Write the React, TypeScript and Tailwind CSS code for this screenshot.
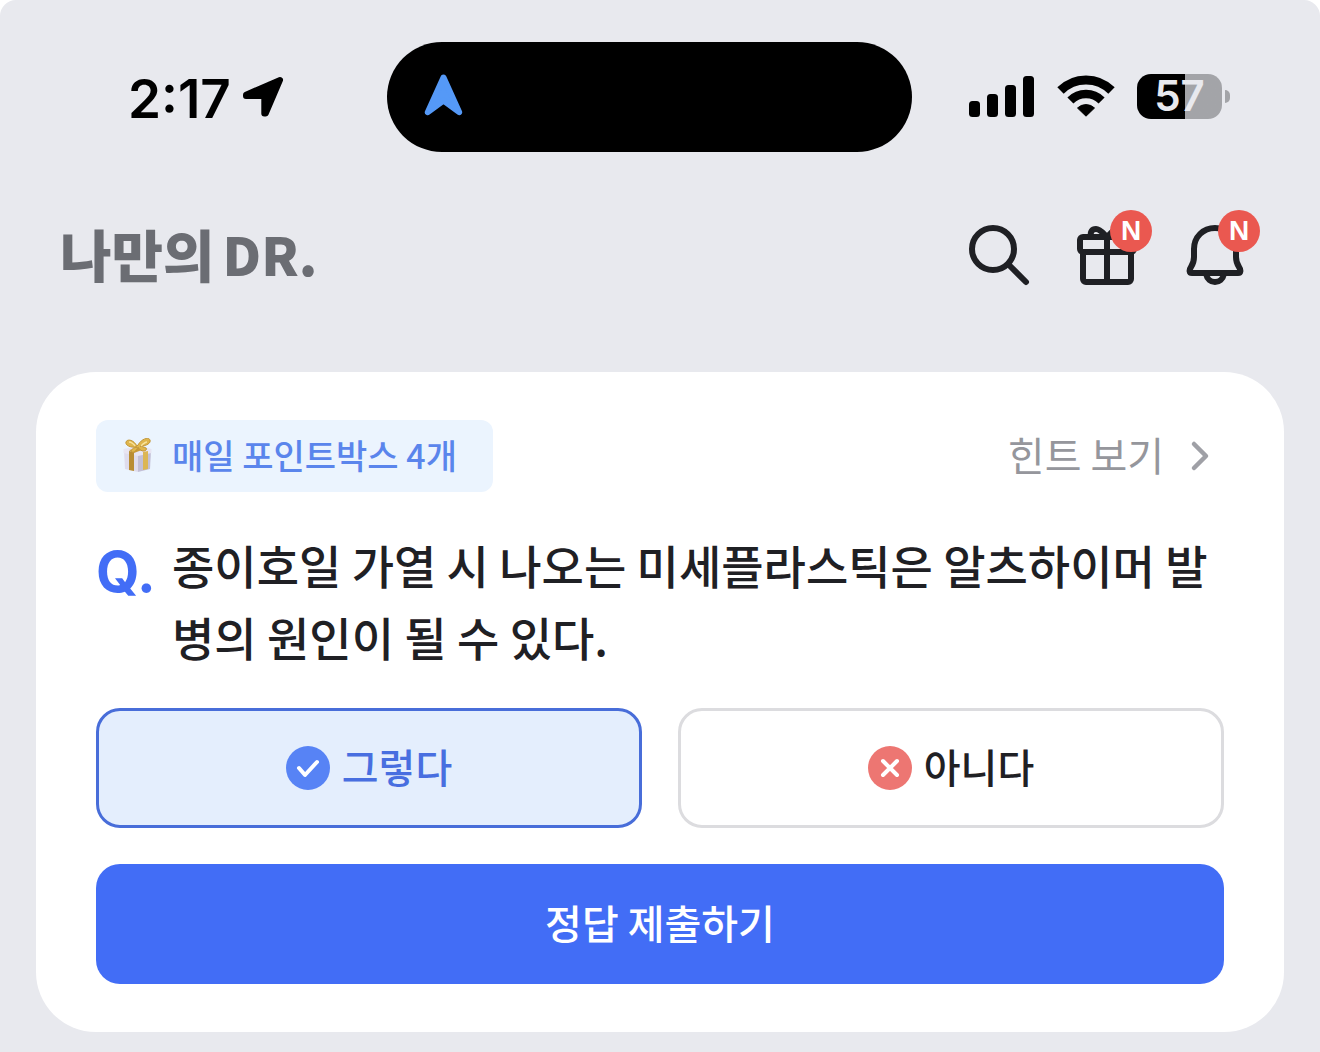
import { useState } from 'react';
import { clsx } from 'clsx';

function StatusBar() {
  return (
    <div className="grid grid-cols-[1fr_525px_1fr] items-center pr-[22px] pt-[42px] text-black">
      <div className="flex items-center gap-3 pl-32">
        <span className="pt-1 font-['Inter',sans-serif] text-[53px] leading-[60px] font-semibold">2:17</span>
        <svg className="size-[42px]" viewBox="0 0 42 42" aria-hidden="true">
          <path
            d="M37 4 3 18.7v1.3h18.3v17.5h1.400L37 4Z"
            fill="black"
            stroke="black"
            strokeWidth="6"
            strokeLinejoin="round"
          />
        </svg>
      </div>

      {/* Dynamic island */}
      <div className="flex h-[110px] items-center rounded-[56px] bg-black pb-1 pl-[37px]">
        <svg className="h-[42px] w-[39px]" viewBox="0 0 39 42" aria-hidden="true">
          <path
            d="M19.5 3.5 3.8 38.2 19.5 26.5 35.2 38.2Z"
            fill="#5599f7"
            stroke="#5599f7"
            strokeWidth="6"
            strokeLinejoin="round"
          />
        </svg>
      </div>

      <div className="flex items-center justify-end pr-[68px] pb-0.5">
        <svg className="h-[42px] w-[66px]" viewBox="0 0 66 42" aria-hidden="true">
          <rect x="0" y="26" width="11" height="16" rx="3.5" />
          <rect x="18" y="19" width="11" height="23" rx="3.5" />
          <rect x="36" y="10" width="11" height="32" rx="3.5" />
          <rect x="54" y="1" width="11" height="41" rx="3.5" />
        </svg>
        <svg className="ml-[22px] h-[42px] w-[58px]" viewBox="0 0 58 42" fill="none" stroke="black" aria-hidden="true">
          <path d="M3.5 15.5a36 36 0 0 1 51 0" strokeWidth="9" />
          <path d="M13.4 25.4a22 22 0 0 1 31.2 0" strokeWidth="8.5" />
          <path d="M20.5 33a12.3 12.3 0 0 1 17 0L29 41.2Z" fill="black" strokeWidth="1" strokeLinejoin="round" />
        </svg>
        <div className="ml-[22px] flex items-center gap-[3px]">
          <div className="flex h-[45px] w-[85px] items-center justify-center rounded-[14px] bg-linear-to-r from-black from-[56%] to-[#a3a4a8] to-[56%]">
            <span className="font-['Inter',sans-serif] text-[42px] leading-[44px] font-semibold text-[#e8e9ee]">57</span>
          </div>
          <div className="h-[13px] w-[5px] rounded-r-full bg-[#a3a4a8]" />
        </div>
      </div>
    </div>
  );
}

function NewBadge() {
  return (
    <span className="absolute -top-[9px] -right-[9px] flex size-[42px] items-center justify-center rounded-full bg-[#ea5850] font-['Liberation_Sans',sans-serif] text-[28px] leading-none font-bold text-white">
      N
    </span>
  );
}

const iconProps = {
  viewBox: '0 0 72 72',
  fill: 'none',
  stroke: '#1f2024',
  strokeWidth: 6,
  strokeLinecap: 'round',
  strokeLinejoin: 'round',
  'aria-hidden': true,
} as const;

function AppHeader() {
  return (
    <header className="flex items-center justify-between pt-[67px] pr-[69px] pb-[81px] pl-15">
      <h1 className="flex items-center gap-2 pb-1 leading-[68px] font-black text-[#6b6d73]">
        <span className="text-[56px]">나만의</span>
        <span className="text-[53px]">DR.</span>
      </h1>
      <div className="flex gap-9">
        <button type="button" aria-label="검색">
          <svg className="size-[72px]" {...iconProps}>
            <circle cx="30" cy="30" r="21" />
            <path d="m45.5 45.5 17.5 17.5" />
          </svg>
        </button>
        <button type="button" aria-label="선물" className="relative">
          <svg className="size-[72px]" {...iconProps}>
            <rect x="9" y="18" width="54" height="15" rx="3" />
            <path d="M12 33v27a3 3 0 0 0 3 3h42a3 3 0 0 0 3-3V33M36 18v45" />
            <path d="M20 17c-1-4 1-7 5-7s7 4 11 8c4-4 7-8 11-8s6 3 5 7" />
          </svg>
          <NewBadge />
        </button>
        <button type="button" aria-label="알림" className="relative">
          <svg className="size-[72px]" {...iconProps}>
            <path d="M36 9C24 9 15 18 15 30v8c0 4-1 7-3 10s-2 6 1 6h46c3 0 3-3 1-6s-3-6-3-10v-8C57 18 48 9 36 9Z" />
            <path d="M27 55c1 5 5 8 9 8s8-3 9-8" />
          </svg>
          <NewBadge />
        </button>
      </div>
    </header>
  );
}

function GiftBox() {
  return (
    <svg className="size-9" viewBox="0 0 36 36" aria-hidden="true">
      <path d="M4 13 18 16v18L5 31Z" fill="#dfdcec" />
      <path d="M18 16 31 13l-1 18-12 3Z" fill="#c3c0d6" />
      <path d="m3.5 11 14.500-3 13.500 3v4l-13.500 3-14.500-3Z" fill="#e8e5f2" />
      <path d="m9 13 5 1v19l-5-1Z" fill="#b98d33" />
      <path d="m23 14 5-1v18l-5 1Z" fill="#dcb654" />
      <path d="m9 12 14-3 4 1-13 5Z" fill="#c99a3a" />
      <path
        d="M17 8C13 1 7 1 6 4s4 6 11 5c-5 1-7 4-5 5s5-2 6-5c2 4 6 5 8 3s-2-3-6-4c7 0 11-3 10-6s-8-2-12 5Z"
        fill="#e0b64c"
        stroke="#c29636"
        strokeWidth="1"
      />
      <path d="M9 4c2 0 5 2 6 4M27 4c-2 0-4 2-6 4" stroke="#f8e39c" strokeWidth="1.5" fill="none" />
    </svg>
  );
}

const answers = [
  { value: 'yes', label: '그렇다', color: '#5783f5', mark: 'm13 22 6 7 12-13' },
  { value: 'no', label: '아니다', color: '#ed7672', mark: 'm15 15 14 14M29 15 15 29' },
];

function QuizCard() {
  const [selected, setSelected] = useState('yes');

  return (
    <main className="mx-9 flex flex-col gap-9 rounded-[60px] bg-white px-15 py-12">
      <div className="flex items-center justify-between">
        <div className="flex h-[72px] items-center gap-4 rounded-xl bg-[#ebf4fe] pr-9 pl-6 text-[34px] text-[#5a85ec]">
          <GiftBox />
          <span className="pb-1">매일 포인트박스 4개</span>
        </div>
        <a href="#hint" className="flex items-center gap-4 text-[40px] leading-[60px] font-normal text-[#95969c]">
          <span className="pb-1">힌트 보기</span>
          <svg className="size-11" viewBox="0 0 44 44" fill="none" aria-hidden="true">
            <path
              d="m14 10 12 12-12 12"
              stroke="#9fa0a6"
              strokeWidth="4.5"
              strokeLinecap="round"
              strokeLinejoin="round"
            />
          </svg>
        </a>
      </div>

      <div className="flex text-[46px] leading-[72px] text-[#1f2024]">
        <span className="w-19 shrink-0 pt-2 font-['Inter',sans-serif] text-[56px] font-bold text-[#426df6]">Q.</span>
        <p className="break-all">종이호일 가열 시 나오는 미세플라스틱은 알츠하이머 발병의 원인이 될 수 있다.</p>
      </div>

      <div className="grid grid-cols-2 gap-9">
        {answers.map((answer) => (
          <button
            key={answer.value}
            type="button"
            aria-pressed={selected === answer.value}
            onClick={() => setSelected(answer.value)}
            className={clsx(
              'flex h-[120px] items-center justify-center gap-3 rounded-3xl border-3 text-[40px]',
              selected === answer.value
                ? 'border-[#486dd9] bg-[#e4eefd] text-[#486ee0]'
                : 'border-[#dcdcdf] bg-white text-[#1f2024]'
            )}
          >
            <svg className="size-11" viewBox="0 0 44 44" fill="none" aria-hidden="true">
              <circle cx="22" cy="22" r="22" fill={answer.color} />
              <path d={answer.mark} stroke="white" strokeWidth="4" strokeLinecap="round" strokeLinejoin="round" />
            </svg>
            <span className="pb-1">{answer.label}</span>
          </button>
        ))}
      </div>

      <button type="button" className="h-[120px] rounded-3xl bg-[#426df6] pb-1 text-[40px] text-white">
        정답 제출하기
      </button>
    </main>
  );
}

export default function App() {
  return (
    <div className="bg-white">
      <div className="min-h-screen rounded-t-2xl bg-[#e8e9ee] pb-5 font-['Noto_Sans_CJK_KR',sans-serif] font-medium">
        <StatusBar />
        <AppHeader />
        <QuizCard />
      </div>
    </div>
  );
}
